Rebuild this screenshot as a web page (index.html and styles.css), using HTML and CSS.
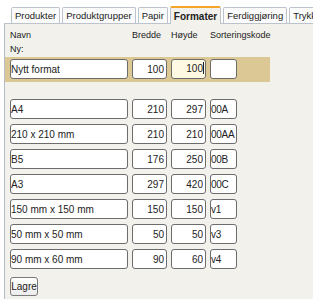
FILE: index.html
```html
<!DOCTYPE html>
<html>
<head>
<meta charset="utf-8">
<link rel="stylesheet" href="styles.css">
</head>
<body>
<div class="tabs">
  <div class="tab">Produkter</div>
  <div class="tab">Produktgrupper</div>
  <div class="tab">Papir</div>
  <div class="tab active">Formater</div>
  <div class="tab">Ferdiggjøring</div>
  <div class="tab">Trykk</div>
</div>
<div class="panel">
  <div class="grid head">
    <span>Navn</span><span>Bredde</span><span>Høyde</span><span>Sorteringskode</span>
  </div>
  <div class="ny">Ny:</div>
  <div class="band">
    <div class="grid">
      <input class="inp" value="Nytt format">
      <input class="inp num" value="100">
      <div class="inp num focus">100<span class="caret"></span></div>
      <input class="inp code" value="">
    </div>
  </div>
  <div class="rows">
    <div class="grid"><input class="inp" value="A4"><input class="inp num" value="210"><input class="inp num" value="297"><input class="inp code" value="00A"></div>
    <div class="grid"><input class="inp" value="210 x 210 mm"><input class="inp num" value="210"><input class="inp num" value="210"><input class="inp code" value="00AA"></div>
    <div class="grid"><input class="inp" value="B5"><input class="inp num" value="176"><input class="inp num" value="250"><input class="inp code" value="00B"></div>
    <div class="grid"><input class="inp" value="A3"><input class="inp num" value="297"><input class="inp num" value="420"><input class="inp code" value="00C"></div>
    <div class="grid"><input class="inp" value="150 mm x 150 mm"><input class="inp num" value="150"><input class="inp num" value="150"><input class="inp code" value="v1"></div>
    <div class="grid"><input class="inp" value="50 mm x 50 mm"><input class="inp num" value="50"><input class="inp num" value="50"><input class="inp code" value="v3"></div>
    <div class="grid"><input class="inp" value="90 mm x 60 mm"><input class="inp num" value="90"><input class="inp num" value="60"><input class="inp code" value="v4"></div>
  </div>
  <button class="btn">Lagre</button>
</div>
</body>
</html>
```
FILE: styles.css
```css
html, body {
  margin: 0;
  padding: 0;
  background: #fff;
  font-family: "Liberation Sans", Arial, sans-serif;
  font-size: 10px;
  color: #222;
  overflow: hidden;
  height: 299px;
}
.tabs {
  display: flex;
  align-items: flex-end;
  gap: 2px;
  padding: 5px 0 0 11px;
  white-space: nowrap;
  height: 18px;
  font-size: 9.5px;
}
.tab {
  height: 15px;
  line-height: 16px;
  padding: 0 3px;
  border: 1px solid #bcc3cc;
  border-bottom: none;
  background: #fbfbfb;
  border-radius: 2px 2px 0 0;
}
.tab.active {
  height: 16px;
  line-height: 17px;
  font-weight: bold;
  font-size: 10px;
  background: #f2f1ec;
  border-top: 2px solid #f4a52a;
  position: relative;
  top: 1px;
  z-index: 1;
}
.panel {
  margin-left: 4px;
  border-left: 1px solid #b5bcc7;
  border-top: 1px solid #bcc3cc;
  background: #f2f1ec;
  height: 280px;
  padding-top: 4px;
}
.grid {
  display: grid;
  grid-template-columns: 118px 35px 35px 27px;
  column-gap: 4px;
  padding-left: 5px;
}
.head {
  line-height: 14px;
  font-size: 9px;
  white-space: nowrap;
}
.ny {
  padding-left: 5px;
  line-height: 15px;
  font-size: 9px;
}
.band {
  background: #dcc894;
  width: 265px;
  padding: 2px 0 3px 0;
}
.inp {
  box-sizing: border-box;
  height: 20px;
  margin: 0;
  border: 1px solid #6c6c6c;
  border-radius: 3px;
  background: #fff;
  font-family: "Liberation Sans", Arial, sans-serif;
  font-size: 10px;
  color: #222;
  padding: 0 2px 0 0;
  outline: none;
  width: 100%;
}
.code {
  padding: 0;
  letter-spacing: -0.3px;
}
.num {
  text-align: right;
}
div.inp {
  line-height: 18px;
}
.focus {
  background: #fdf9e2;
  padding-right: 1px;
}
.caret {
  display: inline-block;
  width: 1px;
  height: 12px;
  background: #222;
  vertical-align: -2px;
}
.rows {
  display: flex;
  flex-direction: column;
  gap: 5px;
  margin-top: 17px;
}
.btn {
  margin: 8px 0 0 5px;
  height: 19px;
  width: 28px;
  padding: 0;
  font-family: "Liberation Sans", Arial, sans-serif;
  font-size: 10px;
  color: #222;
  border: 1px solid #7a7a7a;
  border-radius: 3px;
  background: linear-gradient(#ffffff, #ececec);
}
```
